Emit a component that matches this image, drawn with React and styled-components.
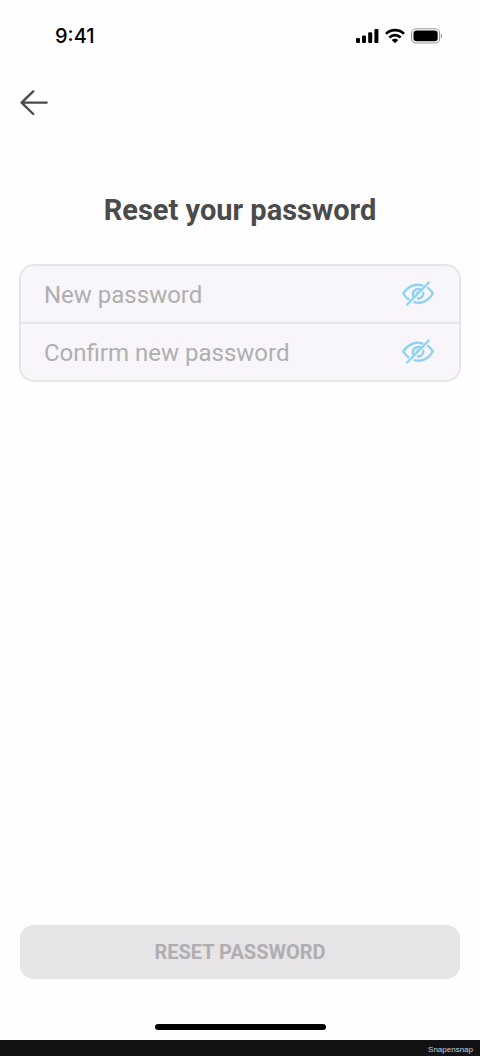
import React, { useState } from 'react'
import styled, { createGlobalStyle } from 'styled-components'

const GlobalStyle = createGlobalStyle`
  * {
    box-sizing: border-box;
  }
  body {
    margin: 0;
    background: #fefefe;
    font-family: Roboto, 'Liberation Sans', sans-serif;
  }
  button, input {
    font-family: inherit;
  }
`;

const Screen = styled.div`
  display: flex;
  flex-direction: column;
  min-height: 100vh;
`;

const StatusBar = styled.div`
  display: flex;
  align-items: center;
  justify-content: space-between;
  height: 72px;
  padding: 0 37px 0 55px;
`;

const Time = styled.span`
  font-family: Inter, 'Liberation Sans', sans-serif;
  font-size: 20px;
  font-weight: 500;
  line-height: 24px;
  color: #000;
`;

const StatusIcons = styled.div`
  display: flex;
  align-items: center;
  gap: 6px;
`;

const Nav = styled.nav`
  display: flex;
  padding: 13px 14px 11px;
`;

const IconButton = styled.button`
  display: flex;
  align-items: center;
  justify-content: center;
  width: 40px;
  height: 36px;
  padding: 0;
  border: 0;
  background: none;
  color: ${({color}) => color};
  cursor: pointer;
`;

const Form = styled.form`
  display: flex;
  flex: 1;
  flex-direction: column;
  padding: 60px 19px 0;
`;

const Title = styled.h1`
  margin: 0 0 36px;
  font-size: 29px;
  font-weight: 700;
  line-height: 36px;
  text-align: center;
  color: #4b4b4b;
`;

const FieldGroup = styled.div`
  overflow: hidden;
  border: 2px solid #e6e4e7;
  border-radius: 15px;
  background: #f8f6fa;
`;

const FieldRow = styled.div`
  display: flex;
  align-items: center;
  height: 56px;
  padding: 0 21px 0 23px;
  & + & {
    height: 58px;
    border-top: 2px solid #e6e4e7;
  }
`;

const Input = styled.input`
  flex: 1;
  min-width: 0;
  padding: 2px 0 0;
  border: 0;
  outline: 0;
  background: none;
  font-size: 24px;
  line-height: 32px;
  color: #4b4b4b;
  &::placeholder {
    color: #afafaf;
    opacity: 1;
  }
`;

const SubmitButton = styled.button`
  height: 54px;
  margin: auto 1px 0;
  border: 0;
  border-radius: 14px;
  background: #e6e4e7;
  font-size: 20px;
  font-weight: 700;
  line-height: 24px;
  text-transform: uppercase;
  color: #b0aeb1;
`;

const HomeIndicator = styled.div`
  width: 171px;
  height: 6px;
  margin: 45px auto 10px;
  border-radius: 3px;
  background: #000;
`;

const Footer = styled.footer`
  height: 16px;
  padding: 3px 7px 0;
  background: #121214;
  font-family: 'Liberation Sans', sans-serif;
  font-size: 8px;
  line-height: 14px;
  text-align: right;
  color: #d0d0d0;
`;

const SignalIcon = () => (
  <svg width="23" height="16" viewBox="0 0 23 16" aria-hidden="true">
    <rect x="0" y="10" width="4" height="5" rx="1.2"/>
    <rect x="6" y="7.5" width="4" height="7.5" rx="1.2"/>
    <rect x="12.2" y="4.3" width="4" height="10.7" rx="1.2"/>
    <rect x="18.4" y="1" width="4" height="14" rx="1.2"/>
  </svg>
)

const WifiIcon = () => (
  <svg width="20" height="16" viewBox="0 0 20 16" fill="none" stroke="#000" strokeWidth="2.7" aria-hidden="true">
    <path d="M1 5.9a12.8 12.8 0 0 1 18 0"/>
    <path d="M4.4 9.5a7.9 7.9 0 0 1 11.2 0"/>
    <path d="M6.7 12a4.7 4.7 0 0 1 6.6 0L10 15.2z" fill="#000" stroke="none"/>
  </svg>
)

const BatteryIcon = () => (
  <svg width="32" height="16" viewBox="0 0 32 16" aria-hidden="true">
    <rect x="0.6" y="0.8" width="28" height="14.2" rx="4.6" fill="none" stroke="#999" strokeWidth="1.1"/>
    <rect x="2.5" y="2.6" width="24.2" height="10.6" rx="3"/>
    <path d="M30 5.6c1.7.8 1.7 4 0 4.8z" fill="#999"/>
  </svg>
)

const ArrowLeftIcon = () => (
  <svg width="28" height="26" viewBox="0 0 28 26" fill="none" stroke="currentColor" strokeWidth="2.4" strokeLinecap="round" strokeLinejoin="round" aria-hidden="true">
    <path d="M26.6 12.6H1.6M13.2 1.4L1.6 12.600l11.600 11.400"/>
  </svg>
)

const EyeIcon = ({crossed}) => (
  <svg width="32" height="26" viewBox="0 0 32 26" fill="none" stroke="currentColor" strokeWidth="2.4" strokeLinecap="round" strokeLinejoin="round" aria-hidden="true">
    {crossed ? (
      <>
        <path d="M5.2 23.500L26.800 1.500"/>
        <path d="M20.300 4.400C12.800 2.300 5.400 5.700 1.200 12.500c1.400 2.300 3.100 4.200 5.200 5.700"/>
        <path d="M26 6.900c2 1.500 3.600 3.400 4.800 5.600-4.300 7.400-11.400 10.700-18.400 8.700"/>
        <path d="M11.400 15.700C9.600 11.100 13 7.300 17.800 8"/>
        <path d="M15.200 12.600c-.6-1.300.4-2.500 1.800-2.100" strokeWidth="1.400"/>
        <path d="M21.300 11.800c.3 3.200-2 5.800-5.400 5.700"/>
      </>
    ) : (
      <>
        <path d="M1.2 12.500C8 1 24 1 30.800 12.500 24 24 8 24 1.200 12.500z"/>
        <circle cx="16" cy="12.500" r="5"/>
      </>
    )}
  </svg>
)

const PasswordField = ({label}) => {
  const [value, setValue] = useState('')
  const [visible, setVisible] = useState(false)

  return (
    <FieldRow>
      <Input
        type={visible ? 'text' : 'password'}
        aria-label={label}
        placeholder={label}
        autoComplete="new-password"
        value={value}
        onChange={(e) => setValue(e.target.value)}
      />
      <IconButton
        type="button"
        color="#8fd3f0"
        aria-label={visible ? 'Hide password' : 'Show password'}
        onClick={() => setVisible(!visible)}
      >
        <EyeIcon crossed={!visible}/>
      </IconButton>
    </FieldRow>
  )
}

const App = () => {
  return (
    <>
      <GlobalStyle/>
      <Screen>
        <StatusBar>
          <Time>9:41</Time>
          <StatusIcons>
            <SignalIcon/>
            <WifiIcon/>
            <BatteryIcon/>
          </StatusIcons>
        </StatusBar>
        <Nav>
          <IconButton type="button" color="#4b4b4b" aria-label="Back">
            <ArrowLeftIcon/>
          </IconButton>
        </Nav>
        <Form onSubmit={(e) => e.preventDefault()}>
          <Title>Reset your password</Title>
          <FieldGroup>
            <PasswordField label="New password"/>
            <PasswordField label="Confirm new password"/>
          </FieldGroup>
          <SubmitButton type="submit" disabled>Reset password</SubmitButton>
        </Form>
        <HomeIndicator/>
        <Footer>Snapensnap</Footer>
      </Screen>
    </>
  )
}

export default App
